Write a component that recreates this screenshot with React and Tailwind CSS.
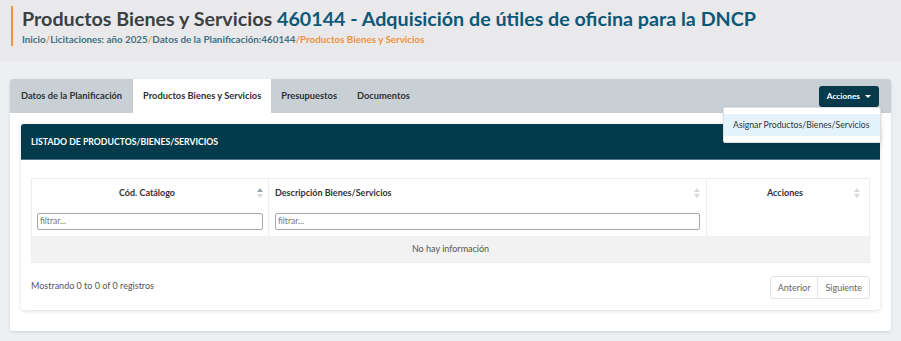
import { useState } from 'react'

const tabs = ['Datos de la Planificación', 'Productos Bienes y Servicios', 'Presupuestos', 'Documentos']

function SortIcon({ up = false }) {
	return (
		<svg width="6" height="12" viewBox="0 0 6 12" className="shrink-0">
			<path d="M3 1 L6 5 L0 5 Z" fill={up ? '#9aa3a8' : '#d5d9dc'} />
			<path d="M3 11 L6 7 L0 7 Z" fill="#d5d9dc" />
		</svg>
	)
}

export default function App() {
	const [active] = useState(1)

	return (
		<div className="w-[901px] h-[341px] overflow-hidden bg-[#edf0f3] text-[#333]" style={{ fontFamily: 'Lato, "Open Sans", sans-serif' }}>
			<header className="h-[62px] bg-[#e9e9eb] pt-[6px] pl-[11px]">
				<div className="border-l-2 border-[#f0923b] pl-[9px] h-[40px] flex flex-col">
					<h1 className="text-[19.7px] leading-[25px] font-bold text-[#3b4044] whitespace-nowrap">
						Productos Bienes y Servicios <span className="text-[#0c5877]">460144 - Adquisición de útiles de oficina para la DNCP</span>
					</h1>
					<div className="text-[9.8px] leading-[14px] font-bold text-[#3f7082] whitespace-nowrap mt-[1px]">
						Inicio<span className="text-[#f0923b]">/</span>Licitaciones: año 2025<span className="text-[#f0923b]">/</span>Datos de la Planificación:460144<span className="text-[#f0923b]">/Productos Bienes y Servicios</span>
					</div>
				</div>
			</header>

			<div className="px-[10px] pt-[17px]">
				<div className="bg-white rounded-[3px] shadow-[0_1px_3px_rgba(0,0,0,0.12)] h-[252px] relative">
					<div className="h-[34px] bg-[#c9d0d5] flex items-stretch rounded-t-[3px]">
						{tabs.map((t, i) => (
							<div key={t} className={`px-[10px] flex items-center text-[9.3px] font-bold text-[#2c3135] ${i === active ? 'bg-white' : ''} ${i === 0 ? 'pl-[11px] pr-[11px]' : ''}`}>
								{t}
							</div>
						))}
						<div className="flex-1" />
						<div className="flex items-center pr-[12px]">
							<button className="h-[21px] px-[8px] bg-[#073a4a] text-white text-[8.3px] font-bold rounded-[3px] flex items-center gap-[5px]">
								Acciones
								<span className="w-0 h-0 border-l-[3px] border-r-[3px] border-t-[3px] border-l-transparent border-r-transparent border-t-white" />
							</button>
						</div>
					</div>

					<div className="absolute right-[10px] top-[28px] w-[158px] bg-white border border-[#dcdfe2] rounded-[2px] shadow-[0_2px_5px_rgba(0,0,0,0.12)] py-[6px] z-10">
						<div className="bg-[#e4f2fb] h-[22px] flex items-center px-[9px] text-[8.7px] text-[#2f3438] whitespace-nowrap">
							Asignar Productos/Bienes/Servicios
						</div>
					</div>

					<div className="mx-[11px] mt-[11px] bg-white rounded-[3px] shadow-[0_1px_4px_rgba(0,0,0,0.14)] h-[186px]">
						<div className="h-[36px] bg-[#033b4c] border-b border-[#4f7683] rounded-t-[3px] flex items-center px-[10px] text-white text-[8.7px] font-bold">
							LISTADO DE PRODUCTOS/BIENES/SERVICIOS
						</div>

						<div className="px-[10px] pt-[18px]">
							<div className="border border-[#eceeef]">
								<div className="grid grid-cols-[237px_438px_1fr]">
									<div className="border-r border-[#eceeef] px-[5px] pt-[6px] pb-[6px]">
										<div className="flex items-center h-[16px]">
											<div className="flex-1 text-center text-[9px] font-bold text-[#333]">Cód. Catálogo</div>
											<SortIcon up />
										</div>
										<div className="mt-[12px] h-[17px] border border-[#a8a8a8] rounded-[2px] px-[2px] flex items-center text-[8.5px] text-[#777]">filtrar...</div>
									</div>
									<div className="border-r border-[#eceeef] px-[6px] pt-[6px] pb-[6px]">
										<div className="flex items-center h-[16px]">
											<div className="flex-1 text-[9px] font-bold text-[#333]">Descripción Bienes/Servicios</div>
											<SortIcon />
										</div>
										<div className="mt-[12px] h-[17px] border border-[#a8a8a8] rounded-[2px] px-[2px] flex items-center text-[8.5px] text-[#777]">filtrar...</div>
									</div>
									<div className="px-[9px] pt-[6px]">
										<div className="flex items-center h-[16px]">
											<div className="flex-1 text-center text-[9px] font-bold text-[#333]">Acciones</div>
											<SortIcon />
										</div>
									</div>
								</div>
								<div className="h-[26px] bg-[#f2f2f2] flex items-center justify-center text-[9px] text-[#555]">No hay información</div>
							</div>

							<div className="flex items-center justify-between mt-[13px]">
								<div className="text-[9px] text-[#555] -mt-[4px]">Mostrando 0 to 0 of 0 registros</div>
								<div className="flex border border-[#e2e5e8] rounded-[3px] h-[23px]">
									<div className="px-[7px] flex items-center text-[9px] text-[#666] border-r border-[#e2e5e8]">Anterior</div>
									<div className="px-[7px] flex items-center text-[9px] text-[#666]">Siguiente</div>
								</div>
							</div>
						</div>
					</div>
				</div>
			</div>
		</div>
	)
}
